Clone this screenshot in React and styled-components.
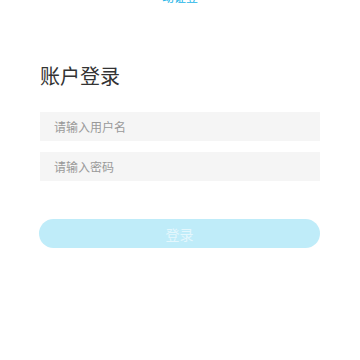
import React from "react";
import styled, { createGlobalStyle } from "styled-components";

const GlobalStyle = createGlobalStyle`
  html, body {
    margin: 0;
    padding: 0;
    background: #fff;
    font-family: "Noto Sans CJK SC", "Noto Sans", sans-serif;
  }
  * { box-sizing: border-box; }
`;

const Page = styled.div`
  width: 360px;
  height: 360px;
  overflow: hidden;
  display: flex;
  flex-direction: column;
  padding: 0 40px;
`;

const TopLink = styled.div`
  margin-top: -10px;
  height: 14px;
  line-height: 14px;
  text-align: center;
  font-size: 12px;
  color: #1cb5e8;
`;

const Heading = styled.h1`
  margin: 58px 0 22px;
  font-size: 20px;
  font-weight: 400;
  line-height: 28px;
  color: #333;
`;

const Field = styled.input`
  width: 280px;
  height: 29px;
  border: none;
  outline: none;
  background: #f5f5f5;
  padding: 0 14px;
  font-family: inherit;
  font-size: 12px;
  color: #333;
  margin-bottom: ${(p) => p.$gap || 0}px;
  &::placeholder {
    color: #999;
  }
`;

const Submit = styled.button`
  width: 281px;
  height: 29px;
  margin-left: -1px;
  border: none;
  border-radius: 15px;
  background: #bfecf9;
  color: #e4f7fd;
  font-family: inherit;
  font-size: 14px;
  cursor: pointer;
`;

export default function App() {
  return (
    <>
      <GlobalStyle />
      <Page>
        <TopLink>动证登</TopLink>
        <Heading>账户登录</Heading>
        <Field $gap={11} placeholder="请输入用户名" />
        <Field $gap={38} type="password" placeholder="请输入密码" />
        <Submit disabled>登录</Submit>
      </Page>
    </>
  );
}
